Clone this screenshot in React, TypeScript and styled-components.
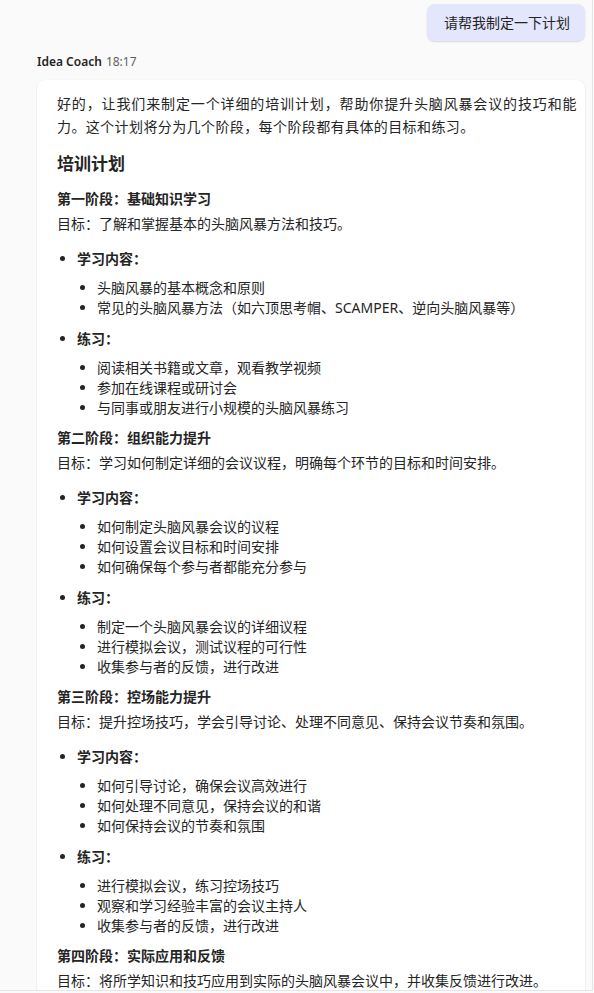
import * as React from 'react';
import styled, { createGlobalStyle } from 'styled-components';

const GlobalStyle = createGlobalStyle`
    html, body {
        margin: 0;
        padding: 0;
        background: #fafafa;
    }
    body {
        font-family: "Noto Sans", "Noto Sans CJK SC", sans-serif;
        color: #242424;
        -webkit-font-smoothing: antialiased;
    }
`;

interface IStage {
    title: string;
    goal: string;
    learn: string[];
    practice: string[];
}

const stages: IStage[] = [
    {
        title: '第一阶段：基础知识学习',
        goal: '了解和掌握基本的头脑风暴方法和技巧。',
        learn: ['头脑风暴的基本概念和原则', '常见的头脑风暴方法（如六顶思考帽、SCAMPER、逆向头脑风暴等）'],
        practice: ['阅读相关书籍或文章，观看教学视频', '参加在线课程或研讨会', '与同事或朋友进行小规模的头脑风暴练习'],
    },
    {
        title: '第二阶段：组织能力提升',
        goal: '学习如何制定详细的会议议程，明确每个环节的目标和时间安排。',
        learn: ['如何制定头脑风暴会议的议程', '如何设置会议目标和时间安排', '如何确保每个参与者都能充分参与'],
        practice: ['制定一个头脑风暴会议的详细议程', '进行模拟会议，测试议程的可行性', '收集参与者的反馈，进行改进'],
    },
    {
        title: '第三阶段：控场能力提升',
        goal: '提升控场技巧，学会引导讨论、处理不同意见、保持会议节奏和氛围。',
        learn: ['如何引导讨论，确保会议高效进行', '如何处理不同意见，保持会议的和谐', '如何保持会议的节奏和氛围'],
        practice: ['进行模拟会议，练习控场技巧', '观察和学习经验丰富的会议主持人', '收集参与者的反馈，进行改进'],
    },
    {
        title: '第四阶段：实际应用和反馈',
        goal: '将所学知识和技巧应用到实际的头脑风暴会议中，并收集反馈进行改进。',
        learn: [],
        practice: [],
    },
];

export default function App() {
    return (
        <>
            <GlobalStyle />
            <Page>
                <UserRow>
                    <UserBubble>请帮我制定一下计划</UserBubble>
                </UserRow>
                <Meta>
                    <span className="sender">Idea Coach</span>
                    <span className="time">18:17</span>
                </Meta>
                <Card>
                    <Intro>
                        好的，让我们来制定一个详细的培训计划，帮助你提升头脑风暴会议的技巧和能力。这个计划将分为几个阶段，每个阶段都有具体的目标和练习。
                    </Intro>
                    <Heading>培训计划</Heading>
                    {stages.map((stage) => (
                        <Stage key={stage.title}>
                            <StageTitle>{stage.title}</StageTitle>
                            <Goal>目标：{stage.goal}</Goal>
                            {stage.learn.length > 0 && (
                                <OuterList>
                                    <li>
                                        <strong>学习内容：</strong>
                                        <InnerList>
                                            {stage.learn.map((item) => (
                                                <li key={item}>{item}</li>
                                            ))}
                                        </InnerList>
                                    </li>
                                    <li>
                                        <strong>练习：</strong>
                                        <InnerList>
                                            {stage.practice.map((item) => (
                                                <li key={item}>{item}</li>
                                            ))}
                                        </InnerList>
                                    </li>
                                </OuterList>
                            )}
                        </Stage>
                    ))}
                </Card>
            </Page>
        </>
    );
}

const Page = styled.div`
    width: 593px;
    height: 991px;
    box-sizing: border-box;
    padding: 4px 7px 0 37px;
    border-right: 1px solid #e6e6e6;
    border-bottom: 1px solid #e6e6e6;
    overflow: hidden;
    display: flex;
    flex-direction: column;
`;

const UserRow = styled.div`
    display: flex;
    justify-content: flex-end;
`;

const UserBubble = styled.div`
    background: #e3e6fc;
    border-radius: 8px;
    padding: 8px 15px 8px 17px;
    font-size: 14px;
    line-height: 21px;
    color: #242424;
    box-shadow: 0 1px 2px rgba(0, 0, 0, 0.14);
`;

const Meta = styled.div`
    margin-top: 13px;
    font-size: 12px;
    line-height: 16px;

    .sender {
        font-weight: 600;
        color: #242424;
    }
    .time {
        margin-left: 4px;
        color: #616161;
    }
`;

const Card = styled.div`
    margin-top: 10px;
    background: #ffffff;
    border-radius: 8px;
    box-shadow: 0 1px 2px rgba(0, 0, 0, 0.12), 0 0 1px rgba(0, 0, 0, 0.08);
    padding: 12px 8px 20px 20px;
    font-size: 14px;
    color: #242424;
`;

const Intro = styled.p`
    margin: 0;
    line-height: 23px;
    letter-spacing: 0.4px;
    text-align: justify;
`;

const Heading = styled.h3`
    margin: 14px 0 3px;
    font-size: 17px;
    font-weight: 700;
    line-height: 24px;
`;

const Stage = styled.section`
    display: flex;
    flex-direction: column;
`;

const StageTitle = styled.h4`
    margin: 10px 0 0;
    font-size: 14px;
    font-weight: 700;
    line-height: 20px;
`;

const Goal = styled.p`
    margin: 5px 0 0;
    line-height: 20px;
`;

const OuterList = styled.ul`
    margin: 15px 0 0;
    padding-left: 20px;
    list-style-type: disc;

    > li {
        line-height: 20px;
    }
    > li + li {
        margin-top: 11px;
    }
    strong {
        font-weight: 700;
    }
`;

const InnerList = styled.ul`
    margin: 9px 0 0;
    padding-left: 20px;
    list-style-type: disc;

    > li {
        line-height: 20px;
    }
`;
